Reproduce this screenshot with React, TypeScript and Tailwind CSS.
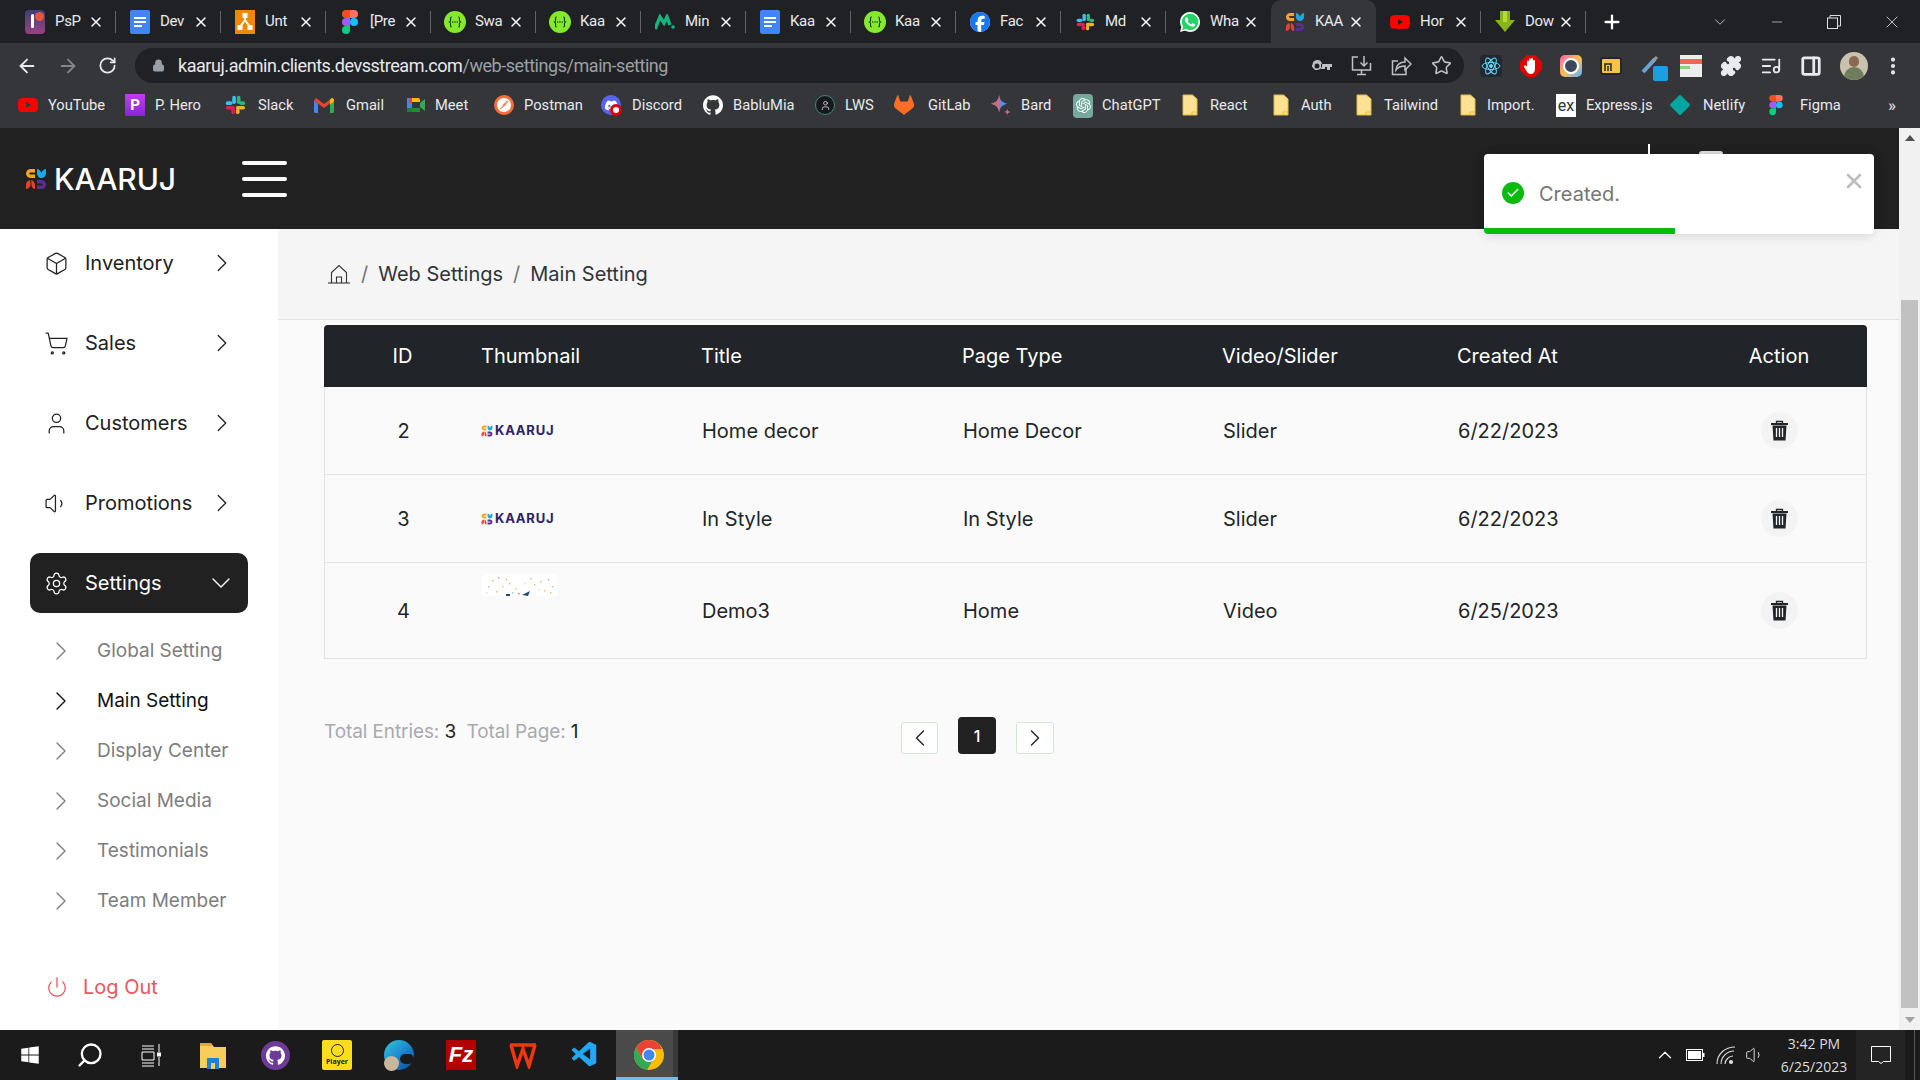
import React from "react";
import {
  SiGithub, SiGitlab, SiFacebook, SiWhatsapp, SiYoutube, SiPostman, SiDiscord, SiOpenai,
} from "react-icons/si";
import { FaWindows } from "react-icons/fa";
import { VscVscode } from "react-icons/vsc";
import {
  ArrowLeft, ArrowRight, RotateCw, Lock, Star, Puzzle, MoreVertical, Plus, X, ChevronDown, Minus,
  ChevronRight, ChevronLeft, Box, ShoppingCart, User, Volume1, Settings, Power, ChevronUp, Search,
  Check, ListMusic, PanelRight,
} from "lucide-react";

const Slack = ({ s = 20 }: { s?: number }) => (
  <svg width={s} height={s} viewBox="0 0 24 24">
    <rect x="9" y="2" width="4" height="9" rx="2" fill="#36c5f0" />
    <rect x="2" y="8" width="7" height="4" rx="2" fill="#36c5f0" />
    <rect x="14" y="2" width="4" height="9" rx="2" fill="#2eb67d" />
    <rect x="17" y="8" width="6" height="4" rx="2" fill="#2eb67d" />
    <rect x="13" y="13" width="10" height="4" rx="2" fill="#ecb22e" />
    <rect x="13" y="16" width="4" height="6" rx="2" fill="#ecb22e" />
    <rect x="2" y="13" width="10" height="4" rx="2" fill="#e01e5a" />
    <rect x="8" y="16" width="4" height="6" rx="2" fill="#e01e5a" />
  </svg>
);
const Figma = ({ s = 22 }: { s?: number }) => (
  <svg width={s} height={s} viewBox="0 0 16 24">
    <path d="M8 0H4a4 4 0 0 0 0 8h4z" fill="#f24e1e" />
    <path d="M8 0h4a4 4 0 0 1 0 8H8z" fill="#ff7262" />
    <path d="M8 8H4a4 4 0 0 0 0 8h4z" fill="#a259ff" />
    <circle cx="12" cy="12" r="4" fill="#1abcfe" />
    <path d="M8 16H4a4 4 0 1 0 4 4z" fill="#0acf83" />
  </svg>
);
const Swagger = ({ s = 20 }: { s?: number }) => (
  <svg width={s} height={s} viewBox="0 0 20 20">
    <circle cx="10" cy="10" r="10" fill="#85ea2d" />
    <path d="M7 5.500c-1.500 0-1 2-1 3s-1 1.500-1 1.500 1 .5 1 1.500-.5 3 1 3M13 5.500c1.500 0 1 2 1 3s1 1.500 1 1.500-1 .5-1 1.500.5 3-1 3" fill="none" stroke="#173b05" strokeWidth="1" />
    <circle cx="8" cy="10" r=".7" fill="#173b05" /><circle cx="10" cy="10" r=".7" fill="#173b05" /><circle cx="12" cy="10" r=".7" fill="#173b05" />
  </svg>
);
const Docs = () => (
  <svg width="20" height="24" viewBox="0 0 20 24">
    <rect width="20" height="24" rx="2" fill="#4285f4" />
    <path d="M4 7h12v2H4zM4 11h12v2H4zM4 15h8v2H4z" fill="#fff" />
  </svg>
);
const Kaaruj = ({ s = 22 }: { s?: number }) => (
  <svg width={s} height={s} viewBox="0 0 22 22">
    <path d="M1 5.500C1 3 3 1 6 1h4v3.500H6C5 4.500 4.500 5 4 5.500 4.500 6 5 6.500 6 6.500h4V10H6C3 10 1 8 1 5.500z" fill="#f6a623" />
    <path d="M12 1c2 0 4 2 4.500 4C17 3 19 1 21 1v4c0 3-2 5-4.500 5S12 8 12 5z" fill="#1ea7e1" />
    <path d="M1 21v-4c0-2 1-4 3.500-5 1 1 1 3 1 5 0 2-2.500 4-4.500 4zM6 12c2 0 4 3 4 5v4c-2 0-3.500-2-3.500-4 0-2 0-4-.5-5z" fill="#e8402a" />
    <path d="M12 12h4c3 0 5 2 5 4.500S19 21 16 21h-4v-3.500h4c1 0 1.500-.5 2-1-.5-.5-1-1-2-1h-4z" fill="#5b2d91" />
  </svg>
);
const Folder = () => (
  <svg width="16" height="22" viewBox="0 0 16 22">
    <path d="M1 1h9.500l4.500 4v16H1z" fill="#fde293" stroke="#e8b93c" strokeWidth="1" />
    <path d="M10 21v-3h5" fill="none" stroke="#e8b93c" strokeWidth="1" />
  </svg>
);
const Gmail = () => (
  <svg width="20" height="17" viewBox="0 0 20 16">
    <path d="M0 3v11a1.500 1.500 0 0 0 1.500 1.500H4V6z" fill="#4285f4" />
    <path d="M20 3v11a1.500 1.500 0 0 1-1.500 1.500H16V6z" fill="#34a853" />
    <path d="M0 3l10 7.500L20 3 18 0.500 10 6.500 2 0.500z" fill="#ea4335" />
    <path d="M16 2v5l4-3V2a2 2 0 0 0-2-1.500z" fill="#fbbc04" />
  </svg>
);
const Meet = () => (
  <svg width="20" height="20" viewBox="0 0 20 20">
    <rect x="1" y="3" width="13" height="14" rx="2" fill="#fbbc04" />
    <rect x="1" y="8" width="13" height="9" rx="1" fill="#1e8e3e" />
    <rect x="1" y="3" width="5" height="10" fill="#4285f4" />
    <rect x="6" y="7" width="8" height="6" fill="#35363a" />
    <path d="M14 8l5-4v12l-5-4z" fill="#34a853" />
    <rect x="1" y="13" width="5" height="4" fill="#188038" />
    <rect x="3" y="3" width="3" height="5" fill="#ea4335" />
  </svg>
);
const Bard = () => (
  <svg width="22" height="22" viewBox="0 0 24 24">
    <path d="M10 1c1 6 3 8 9 9.500-6 1.500-8 3.500-9 9.500-1-6-3-8-9-9.500C7 9 9 7 10 1z" fill="#5e8fe6" />
    <path d="M10 1c-1 6-3 8-9 9.500 6 1.500 8 3.500 9 9.500z" fill="#d96570" />
    <path d="M19 16c.4 2.200 1 3 3.500 3.500-2.500.5-3.100 1.300-3.500 3.500-.4-2.200-1-3-3.500-3.500 2.500-.5 3.100-1.300 3.500-3.500z" fill="#d96570" />
  </svg>
);
const Chat = () => (
  <span className="flex h-[24px] w-[20px] items-center justify-center rounded-sm bg-[#74aa9c] text-white"><SiOpenai size={15} /></span>
);
const ChromeLogo = () => (
  <svg width="30" height="30" viewBox="0 0 30 30">
    <circle cx="15" cy="15" r="15" fill="#fbbc04" />
    <path d="M15 0A15 15 0 0 0 2 7.500L8.500 19 15 9h13A15 15 0 0 0 15 0z" fill="#ea4335" />
    <path d="M2 7.500A15 15 0 0 0 13 30l6.500-11H8.500z" fill="#34a853" />
    <circle cx="15" cy="15" r="7" fill="#fff" />
    <circle cx="15" cy="15" r="5.500" fill="#4285f4" />
  </svg>
);
const TrashIcon = () => (
  <svg width="17" height="21" viewBox="0 0 17 21">
    <path d="M5.500 3V1.500h6V3" fill="none" stroke="#212529" strokeWidth="1.300" />
    <rect x="0" y="3" width="17" height="2" fill="#212529" />
    <path d="M1.500 5.500h14l-1 15h-12z" fill="#212529" />
    <path d="M5.500 8v9M8.500 8v9M11.500 8v9" stroke="#f3f3f3" strokeWidth="1.300" />
  </svg>
);
const HomeIcon = () => (
  <svg width="22" height="20" viewBox="0 0 22 20" fill="none" stroke="#333" strokeWidth="1.100">
    <path d="M3.500 19V8.500L11 1.500l7.500 7V19" />
    <path d="M0 19h22" />
    <path d="M8.500 19v-6h5v6" />
  </svg>
);
const Fav = ({ k }: { k: string }) => {
  if (k === "pspdf") return (
    <span className="relative block h-[24px] w-[20px] rounded-sm bg-gradient-to-b from-[#3a3d7c] to-[#9a3f7d]">
      <span className="absolute left-[6px] top-[4px] h-[14px] w-[3px] rounded-full bg-white" />
      <span className="absolute left-[10px] top-[2px] h-[9px] w-[9px] rounded-full bg-[#e9553c]" />
    </span>
  );
  if (k === "docs") return <Docs />;
  if (k === "unt") return (
    <svg width="20" height="24" viewBox="0 0 20 24"><rect width="20" height="24" fill="#f08705" /><path d="M10 4v6M10 10l-5 7M10 10l5 7" stroke="#fff" strokeWidth="2" /><rect x="7.500" y="3" width="5" height="5" fill="#fff" /><rect x="2.500" y="15" width="5" height="5" fill="#fff" /><rect x="12.500" y="15" width="5" height="5" fill="#fff" /></svg>
  );
  if (k === "figma") return <Figma s={24} />;
  if (k === "swagger") return <Swagger s={22} />;
  if (k === "mint") return (
    <svg width="20" height="16" viewBox="0 0 20 16"><path d="M0 15L5 3l4 6 3-6 3 8" fill="none" stroke="#16b47e" strokeWidth="3.500" /><circle cx="18" cy="13" r="1.800" fill="#16b47e" /></svg>
  );
  if (k === "fb") return <span className="block rounded-full bg-white"><SiFacebook size={20} color="#1877f2" /></span>;
  if (k === "slack") return <Slack />;
  if (k === "wa") return <span className="block rounded-full bg-[#25d366]"><SiWhatsapp size={20} color="#fff" /></span>;
  if (k === "kaaruj") return <Kaaruj s={20} />;
  if (k === "yt") return <SiYoutube size={20} color="#ff0000" />;
  if (k === "dl") return (
    <svg width="20" height="24" viewBox="0 0 20 24"><path d="M5 1h10v9h5L10 22 0 10h5z" fill="#86b51b" /><path d="M8 1h4v11H8z" fill="#b5d93b" /></svg>
  );
  return null;
};

const tabs = [
  ["pspdf", "PsP"], ["docs", "Dev"], ["unt", "Unt"], ["figma", "[Pre"], ["swagger", "Swa"], ["swagger", "Kaa"], ["mint", "Min"],
  ["docs", "Kaa"], ["swagger", "Kaa"], ["fb", "Fac"], ["slack", "Md"], ["wa", "Wha"],
];
const Tab = ({ k, t, active, sep = true }: { k: string; t: string; active?: boolean; sep?: boolean }) => (
  <div className={`flex h-[43px] w-[105px] shrink-0 items-center ${active ? "rounded-t-[10px] bg-[#35363a]" : ""}`}>
    <div className="ml-[12px] flex w-[24px] shrink-0 justify-center"><Fav k={k} /></div>
    <span className="ml-[8px] w-[27px] shrink-0 whitespace-nowrap text-[15px] tracking-[-0.3px] text-[#e8eaed]">{t}</span>
    <X size={16} strokeWidth={2.2} className="ml-[6px] shrink-0 text-white" />
    <span className={`ml-auto h-[22px] w-px ${sep ? "bg-[#5f6368]" : ""}`} />
  </div>
);

const marks: { w: string; gap: string; icon: React.ReactNode; t: string }[] = [
  { w: "w-[107px]", gap: "gap-[10px]", icon: <SiYoutube size={20} color="#ff0000" />, t: "YouTube" },
  { w: "w-[99px]", gap: "gap-[10px]", icon: <span className="flex h-[22px] w-[20px] items-center justify-center bg-gradient-to-b from-[#c43cf0] to-[#8a23d8] text-[15px] font-bold text-white">P</span>, t: "P. Hero" },
  { w: "w-[90px]", gap: "gap-[12px]", icon: <Slack s={22} />, t: "Slack" },
  { w: "w-[92px]", gap: "gap-[12px]", icon: <Gmail />, t: "Gmail" },
  { w: "w-[88px]", gap: "gap-[9px]", icon: <Meet />, t: "Meet" },
  { w: "w-[107px]", gap: "gap-[10px]", icon: <span className="flex h-[20px] w-[20px] items-center justify-center rounded-full bg-[#ff6c37] text-white"><SiPostman size={14} /></span>, t: "Postman" },
  { w: "w-[102px]", gap: "gap-[11px]", icon: <span className="relative flex h-[20px] w-[20px] items-center justify-center rounded-full bg-[#5865f2] text-white"><SiDiscord size={13} /><span className="absolute -bottom-[1px] -right-[1px] h-[12px] w-[12px] rounded-full border-[3px] border-[#e00000] bg-white" /></span>, t: "Discord" },
  { w: "w-[112px]", gap: "gap-[10px]", icon: <SiGithub size={20} color="#fff" />, t: "BabluMia" },
  { w: "w-[79px]", gap: "gap-[10px]", icon: <span className="flex h-[20px] w-[20px] items-center justify-center rounded-full border border-[#3b8a78] bg-[#17191c] text-[#c8c8c8]"><User size={11} /></span>, t: "LWS" },
  { w: "w-[96px]", gap: "gap-[14px]", icon: <SiGitlab size={20} color="#fc6d26" />, t: "GitLab" },
  { w: "w-[83px]", gap: "gap-[9px]", icon: <Bard />, t: "Bard" },
  { w: "w-[109px]", gap: "gap-[9px]", icon: <Chat />, t: "ChatGPT" },
  { w: "w-[91px]", gap: "gap-[12px]", icon: <Folder />, t: "React" },
  { w: "w-[83px]", gap: "gap-[12px]", icon: <Folder />, t: "Auth" },
  { w: "w-[104px]", gap: "gap-[12px]", icon: <Folder />, t: "Tailwind" },
  { w: "w-[96px]", gap: "gap-[11px]", icon: <Folder />, t: "Import." },
  { w: "w-[114px]", gap: "gap-[10px]", icon: <span className="flex h-[23px] w-[20px] items-center justify-center bg-white text-[16px] text-[#333]">ex</span>, t: "Express.js" },
  { w: "w-[96px]", gap: "gap-[13px]", icon: <span className="block h-[20px] w-[20px] rotate-45 scale-75 rounded-[2px] bg-[#05a6a0]" />, t: "Netlify" },
  { w: "w-[95px]", gap: "gap-[14px]", icon: <Figma s={20} />, t: "Figma" },
];

const side = [
  [Box, "Inventory"], [ShoppingCart, "Sales"], [User, "Customers"], [Volume1, "Promotions"],
] as const;
const subs = ["Global Setting", "Main Setting", "Display Center", "Social Media", "Testimonials", "Team Member"];

const ThumbLogo = () => (
  <div className="-ml-[1px] flex w-[77px] items-center gap-[2px]">
    <Kaaruj s={12} />
    <span className="whitespace-nowrap text-[13px] font-bold leading-none tracking-[0.8px] text-[#2c2265]">KAARUJ</span>
  </div>
);
const Speckle = () => (
  <svg width="75" height="22" viewBox="0 0 75 22" className="rounded-t-sm bg-white">
    {[[10,6,"#f4c16a"],[16,3,"#e9a0a0"],[20,12,"#f4c16a"],[27,9,"#a5d6b0"],[33,14,"#f4c16a"],[48,4,"#a5d6b0"],[52,10,"#f4c16a"],[58,7,"#9ec7e8"],[66,5,"#e9a0a0"],[70,12,"#a5d6b0"],[14,17,"#f4c16a"],[36,19,"#e66"],[62,16,"#f4c16a"],[6,12,"#a5d6b0"],[24,5,"#f4c16a"],[42,9,"#dcdcdc"],[56,15,"#dcdcdc"],[30,18,"#9ec7e8"],[68,18,"#f4c16a"],[4,18,"#dcdcdc"]].map(([x,y,c],i)=>(
      <rect key={i} x={x as number} y={y as number} width="1.500" height="1.500" fill={c as string} />
    ))}
    <path d="M40 21l8-4-2 5zM24 20h4v2h-4z" fill="#1d4d78" />
  </svg>
);

const rows = [
  { id: 2, h: "h-[88px]", img: <ThumbLogo />, t: "Home decor", p: "Home Decor", v: "Slider", top: "" },
  { id: 3, h: "h-[88px]", img: <ThumbLogo />, t: "In Style", p: "In Style", v: "Slider", top: "" },
  { id: 4, h: "h-[95px]", img: <Speckle />, t: "Demo3", p: "Home", v: "Video", top: "self-start mt-[11px]" },
];
const cols = "grid grid-cols-[157px_220px_261px_260px_235px_262px_148px]";

export default function App() {
  return (
    <div className="flex h-[1080px] w-[1920px] flex-col overflow-hidden bg-white font-['Inter',sans-serif]">
      {/* tab strip */}
      <div className="flex h-[43px] shrink-0 items-center bg-[#202124] pl-[11px] font-['Roboto',sans-serif]">
        {tabs.map(([k, t], i) => <Tab key={i} k={k} t={t} sep={i < 11} />)}
        <Tab k="kaaruj" t="KAA" active sep={false} />
        <Tab k="yt" t="Hor" />
        <Tab k="dl" t="Dow" />
        <Plus size={22} strokeWidth={2.5} className="ml-[15px] shrink-0 text-white" />
        <ChevronDown size={18} strokeWidth={1.2} className="ml-[88px] shrink-0 text-[#c8c8c8]" />
        <Minus size={16} strokeWidth={1} className="ml-[40px] shrink-0 text-[#ddd]" />
        <svg width="14" height="14" viewBox="0 0 14 14" className="ml-[42px] shrink-0" fill="none" stroke="#ddd"><rect x=".5" y="3" width="10" height="10.500" /><path d="M3 3V.5h10.500V11H10.500" /></svg>
        <X size={20} strokeWidth={1} className="ml-[41px] shrink-0 text-[#ddd]" />
      </div>

      {/* toolbar */}
      <div className="flex h-[40px] shrink-0 items-end bg-[#35363a] font-['Roboto',sans-serif]">
        <div className="flex h-[40px] w-[135px] shrink-0 items-center gap-[19px] pl-[16px] pt-[5px]">
          <ArrowLeft size={22} className="text-[#e8eaed]" />
          <ArrowRight size={22} className="text-[#80868b]" />
          <RotateCw size={19} strokeWidth={2.2} className="text-[#e8eaed]" />
        </div>
        <div className="flex h-[35px] w-[1329px] shrink-0 items-center rounded-full bg-[#202124] pl-[17px]">
          <Lock size={13} fill="#9aa0a6" className="text-[#9aa0a6]" />
          <span className="ml-[13px] whitespace-nowrap text-[18px] tracking-[-0.45px] text-[#e8eaed]">kaaruj.admin.clients.devsstream.com<span className="text-[#9aa0a6]">/web-settings/main-setting</span></span>
          <div className="ml-auto flex items-center gap-[19px] pr-[12px] text-[#bdc1c6]">
            <svg width="20" height="12" viewBox="0 0 20 12" fill="#bdc1c6"><path d="M5 0a5 5 0 1 1-4.500 7H0V5h.5A5 5 0 0 1 5 0zm0 3.500a2.500 2.500 0 1 0 0 5 2.500 2.500 0 0 0 0-5zM9 4h11v3h-2v3h-3V7h-2v2H9z" fillRule="evenodd" /></svg>
            <svg width="21" height="21" viewBox="0 0 21 21" fill="none" stroke="#bdc1c6" strokeWidth="1.500"><path d="M7 2H1.500v13h18V8" /><path d="M13 1v10M9.500 7.500L13 11l3.500-3.500" /><path d="M6 19.500h9M10.500 15v4" /></svg>
            <svg width="21" height="21" viewBox="0 0 21 21" fill="none" stroke="#bdc1c6" strokeWidth="1.500"><path d="M7 6H1.500v13.500H15V14" /><path d="M5 15c0-5 4-8 9-8V3l6 6-6 6v-4c-4 0-7 1-9 4z" /></svg>
            <Star size={21} strokeWidth={1.8} />
          </div>
        </div>
        <div className="flex h-[40px] flex-1 items-center gap-[18px] pl-[16px] pt-[5px]">
          <span className="flex h-[22px] w-[22px] shrink-0 items-center justify-center rounded-sm bg-[#23272f]">
            <svg width="20" height="20" viewBox="0 0 20 20" fill="none" stroke="#61dafb" strokeWidth="1"><ellipse cx="10" cy="10" rx="9" ry="3.500" /><ellipse cx="10" cy="10" rx="9" ry="3.500" transform="rotate(60 10 10)" /><ellipse cx="10" cy="10" rx="9" ry="3.500" transform="rotate(120 10 10)" /><circle cx="10" cy="10" r="1.500" fill="#61dafb" /></svg>
          </span>
          <span className="block h-[22px] w-[22px] shrink-0">
            <svg width="22" height="22" viewBox="0 0 22 22"><path d="M7 0h8l7 7v8l-7 7H7l-7-7V7z" fill="#e30000" /><path d="M7 11V6.500a1 1 0 0 1 2 0V4.500a1 1 0 0 1 2 0v-.5a1 1 0 0 1 2 0v2a1 1 0 0 1 2 0v8c0 3-2 5-4 5-3 0-4-2-5-4l-2-3c-.5-1 1-2 2-1z" fill="#fff" /></svg>
          </span>
          <span className="block h-[22px] w-[22px] shrink-0 rounded-[5px] bg-gradient-to-br from-[#f5a] via-[#fb4] to-[#3af] p-[3px]"><span className="block h-full w-full rounded-full border-2 border-white bg-[#3a4a5a]" /></span>
          <span className="block h-[18px] w-[22px] shrink-0">
            <svg width="22" height="18" viewBox="0 0 22 18"><rect x="1" y="1" width="20" height="16" rx="2" fill="#f5c542" stroke="#26262a" strokeWidth="2" /><path d="M5 14V7h6v7M8 14V9" fill="none" stroke="#26262a" strokeWidth="1.500" /></svg>
          </span>
          <span className="relative block h-[22px] w-[22px] shrink-0"><svg width="20" height="20" viewBox="0 0 20 20"><path d="M3 17L15 4" stroke="#6aa5d8" strokeWidth="4" /><path d="M13 6l4-4" stroke="#999" strokeWidth="3" /></svg><span className="absolute -bottom-[4px] right-[-6px] h-[15px] w-[15px] rounded-[2px] bg-[#1c9fe0]" /></span>
          <span className="block h-[22px] w-[22px] shrink-0 bg-[#ededed] pt-[4px]"><span className="block h-[5px] w-full bg-[#f0675a]" /><span className="mt-[2px] block h-[3px] w-[10px] bg-[#8ccf85]" /></span>
          <Puzzle size={22} fill="#e8eaed" className="shrink-0 text-[#e8eaed]" />
          <ListMusic size={22} className="shrink-0 text-[#e8eaed]" />
          <PanelRight size={22} strokeWidth={3} className="shrink-0 text-[#e8eaed]" />
          <span className="relative block h-[28px] w-[28px] shrink-0 overflow-hidden rounded-full bg-[#c9c2ae]">
            <span className="absolute left-[9px] top-[4px] h-[11px] w-[10px] rounded-full bg-[#8d6a4f]" />
            <span className="absolute left-[4px] top-[15px] h-[14px] w-[20px] rounded-t-full bg-[#6f7d5c]" />
          </span>
          <MoreVertical size={22} strokeWidth={2.5} className="-ml-[4px] shrink-0 text-[#e8eaed]" />
        </div>
      </div>

      {/* bookmarks */}
      <div className="flex h-[45px] shrink-0 items-center bg-[#35363a] pl-[18px] font-['Roboto',sans-serif] text-[14.7px] text-[#e8eaed]">
        {marks.map((m) => (
          <div key={m.t} className={`flex shrink-0 items-center ${m.w} ${m.gap}`}>
            <span className="flex shrink-0 items-center justify-center">{m.icon}</span>
            <span className="whitespace-nowrap">{m.t}</span>
          </div>
        ))}
        <span className="ml-[27px] text-[17px]">»</span>
      </div>

      {/* page */}
      <div className="relative flex min-h-0 flex-1">
        <div className="flex min-w-0 flex-1 flex-col">
          <header className="flex h-[101px] shrink-0 items-center bg-[#212121] pl-[25px]">
            <div className="flex w-[217px] shrink-0 items-center gap-[7px]">
              <Kaaruj s={22} />
              <span className="text-[30px] font-medium leading-none tracking-[-0.1px] text-white">KAARUJ</span>
            </div>
            <div className="flex w-[45px] shrink-0 flex-col gap-[12px]">
              <span className="h-[4px] rounded-full bg-white" />
              <span className="h-[4px] rounded-full bg-white" />
              <span className="h-[4px] rounded-full bg-white" />
            </div>
            <div className="mb-[53px] ml-[1361px] h-[16px] w-[2px] shrink-0 bg-white" />
            <div className="mb-[53px] ml-[49px] h-[3px] w-[24px] shrink-0 rounded-t-full bg-[#ddd]" />
          </header>

          <div className="flex min-h-0 flex-1">
            <aside className="flex w-[278px] shrink-0 flex-col bg-white">
              <div className="flex flex-col pt-[4px]">
                {side.map(([I, t]) => (
                  <div key={t} className="mb-[20px] flex h-[60px] items-center pl-[44px] pr-[41px] text-[20px] text-[#212121]">
                    <I size={25} strokeWidth={1.2} className="shrink-0" />
                    <span className="ml-[16px]">{t}</span>
                    <ChevronRight size={30} strokeWidth={1} className="ml-auto shrink-0" />
                  </div>
                ))}
                <div className="mx-[30px] flex h-[60px] items-center rounded-[10px] bg-[#212121] pl-[14px] pr-[11px] text-[20px] text-white">
                  <Settings size={25} strokeWidth={1.2} className="shrink-0" />
                  <span className="ml-[16px]">Settings</span>
                  <ChevronDown size={32} strokeWidth={1} className="ml-auto shrink-0" />
                </div>
                <div className="mt-[13px] flex flex-col">
                  {subs.map((s, i) => (
                    <div key={s} className={`flex h-[50px] items-center pl-[45px] text-[19px] ${i === 1 ? "text-[#111]" : "text-[#7d7d7d]"}`}>
                      <ChevronRight size={32} strokeWidth={1} className="shrink-0" />
                      <span className="ml-[20px]">{s}</span>
                    </div>
                  ))}
                </div>
              </div>
              <div className="mt-[46px] flex items-center gap-[15px] pl-[46px] text-[20px] text-[#ef5360]">
                <Power size={22} strokeWidth={1.4} className="shrink-0" />
                <span>Log Out</span>
              </div>
            </aside>

            <main className="flex min-w-0 flex-1 flex-col bg-[#fafafa]">
              <div className="flex h-[91px] shrink-0 items-center gap-[10px] border-b border-[#e2e2e2] bg-[#f5f5f5] pl-[50px] text-[20px] text-[#2f3338]">
                <HomeIcon />
                <span className="ml-[1px] text-[#6c757d]">/</span>
                <span>Web Settings</span>
                <span className="text-[#6c757d]">/</span>
                <span>Main Setting</span>
              </div>
              <div className="ml-[46px] mr-[32px] mt-[5px] flex flex-col text-[20px] text-[#212529]">
                <div className={`${cols} h-[62px] shrink-0 items-center rounded-t-[4px] bg-[#212529] text-white`}>
                  <span className="text-center">ID</span>
                  <span>Thumbnail</span>
                  <span>Title</span>
                  <span>Page Type</span>
                  <span>Video/Slider</span>
                  <span>Created At</span>
                  <span className="pr-[28px] text-center">Action</span>
                </div>
                <div className="border-x border-b border-[#e2e2e2]">
                  {rows.map((r, i) => (
                    <div key={r.id} className={`${cols} ${r.h} items-center ${i < 2 ? "border-b border-[#e2e2e2]" : ""}`}>
                      <span className="text-center">{r.id}</span>
                      <div className={r.top}>{r.img}</div>
                      <span>{r.t}</span>
                      <span>{r.p}</span>
                      <span>{r.v}</span>
                      <span>6/{r.id === 4 ? 25 : 22}/2023</span>
                      <div className="flex justify-center pr-[30px]">
                        <span className="flex h-[37px] w-[37px] items-center justify-center rounded-full bg-[#f3f3f3]">
                          <TrashIcon />
                        </span>
                      </div>
                    </div>
                  ))}
                </div>
              </div>
              <div className="ml-[46px] mt-[58px] flex items-start">
                <div className="mt-[1px] w-[577px] text-[19px] tracking-[-0.1px] text-[#a9a9b0]">
                  Total Entries: <span className="text-[#212121]">3</span>&nbsp; Total Page: <span className="text-[#212121]">1</span>
                </div>
                <div className="flex items-start gap-[20px]">
                  <span className="mt-[5px] flex h-[32px] w-[37px] items-center justify-center rounded-[3px] border border-[#cfe8cf] bg-white"><ChevronLeft size={28} strokeWidth={1.2} className="text-[#212121]" /></span>
                  <span className="flex h-[37px] w-[38px] items-center justify-center rounded-[4px] bg-[#212121] text-[16px] font-medium text-white">1</span>
                  <span className="mt-[5px] flex h-[32px] w-[38px] items-center justify-center rounded-[3px] border border-[#cfe8cf] bg-white"><ChevronRight size={28} strokeWidth={1.2} className="text-[#212121]" /></span>
                </div>
              </div>
            </main>
          </div>
        </div>

        {/* scrollbar */}
        <div className="flex w-[21px] shrink-0 flex-col items-center bg-[#f1f1f1]">
          <span className="mt-[7px] h-0 w-0 border-x-[5px] border-b-[6px] border-x-transparent border-b-[#505050]" />
          <span className="mt-[159px] h-[708px] w-[17px] bg-[#c1c1c1]" />
          <span className="mt-[9px] h-0 w-0 border-x-[5px] border-t-[6px] border-x-transparent border-t-[#a3a3a3]" />
        </div>

        {/* toast */}
        <div className="absolute left-[1484px] top-[26px] flex h-[80px] w-[390px] flex-col overflow-hidden rounded-[4px] bg-white shadow-[0_1px_10px_rgba(0,0,0,0.1),0_2px_15px_rgba(0,0,0,0.05)]">
          <div className="flex flex-1 items-start">
            <span className="ml-[18px] mt-[28px] flex h-[22px] w-[22px] shrink-0 items-center justify-center rounded-full bg-[#07bc0c] text-white"><Check size={14} strokeWidth={2.5} /></span>
            <span className="ml-[15px] mt-[27px] text-[20px] leading-[26px] text-[#757575]">Created.</span>
            <X size={24} strokeWidth={2.6} className="ml-auto mr-[8px] mt-[15px] shrink-0 text-[#bdbdbd]" />
          </div>
          <div className="h-[6px] w-[191px] bg-[#07bc0c]" />
        </div>
      </div>

      {/* taskbar */}
      <div className="flex h-[50px] shrink-0 items-center bg-[#1b1b1b] font-['Open_Sans',sans-serif] text-white">
        <div className="flex w-[60px] shrink-0 justify-center"><FaWindows size={20} /></div>
        <div className="flex w-[60px] shrink-0 justify-center"><Search size={28} strokeWidth={2} className="-scale-x-100" /></div>
        <div className="flex w-[62px] shrink-0 justify-center">
          <svg width="20" height="24" viewBox="0 0 20 24" fill="none" stroke="#fff"><path d="M1 3h12M1 6h12M1 9h12v8H1zM1 20h12M1 23h12M18 1v8M18 14v9" /><rect x="16.500" y="10" width="3" height="3" fill="#fff" /></svg>
        </div>
        <div className="flex w-[62px] shrink-0 justify-center">
          <svg width="28" height="30" viewBox="0 0 28 30"><path d="M1 3h11l3 4h12v21H1z" fill="#f8cd5c" /><path d="M1 3h11l2 3H1z" fill="#e0a92f" /><rect x="8" y="18" width="12" height="11" fill="#1d83d4" /><rect x="12" y="23" width="4" height="6" fill="#f8cd5c" /></svg>
        </div>
        <div className="flex w-[62px] shrink-0 justify-center">
          <span className="flex h-[29px] w-[29px] items-center justify-center rounded-full bg-[#6e3a98]"><SiGithub size={19} color="#fff" /></span>
        </div>
        <div className="flex w-[62px] shrink-0 justify-center">
          <span className="flex h-[30px] w-[30px] flex-col items-center justify-center rounded-[2px] bg-[#fbdd1c] text-[#222]"><span className="h-[13px] w-[13px] rounded-full border border-[#222]" /><span className="text-[7px] font-bold leading-[9px]">Player</span></span>
        </div>
        <div className="flex w-[62px] shrink-0 justify-center">
          <span className="relative block h-[30px] w-[30px] rounded-full bg-gradient-to-br from-[#36c6d3] via-[#1e88d2] to-[#0a4b8f]"><span className="absolute bottom-[6px] right-0 h-[10px] w-[14px] rounded-full bg-[#1b1b1b]" /><span className="absolute -bottom-[1px] left-0 h-[15px] w-[15px] rounded-full bg-[#c8b79a]" /></span>
        </div>
        <div className="flex w-[62px] shrink-0 justify-center">
          <span className="flex h-[30px] w-[30px] items-center justify-center bg-[#b30000] font-['Liberation_Sans',sans-serif] text-[22px] font-bold italic leading-none text-white">Fz</span>
        </div>
        <div className="flex w-[62px] shrink-0 justify-center">
          <svg width="30" height="28" viewBox="0 0 30 28" fill="none"><path d="M2 4h26M3 4l6 21 6-17 6 17 6-21" stroke="#f4360f" strokeWidth="3.500" /></svg>
        </div>
        <div className="flex w-[62px] shrink-0 justify-center"><VscVscode size={30} color="#23a7f2" /></div>
        <div className="flex h-[50px] w-[57px] shrink-0 flex-col items-center justify-between bg-[#4a4a4a]">
          <span className="ml-[8px] mt-[10px]"><ChromeLogo /></span>
          <span className="h-[3px] w-full bg-[#76b9ed]" />
        </div>
        <div className="flex h-[50px] w-[5px] shrink-0 flex-col justify-end bg-[#3a3a3a]"><span className="h-[3px] bg-[#76b9ed]" /></div>

        <div className="ml-[976px] flex shrink-0 items-center">
          <ChevronUp size={22} strokeWidth={1.3} className="shrink-0" />
          <svg width="20" height="12" viewBox="0 0 20 12" className="ml-[10px] shrink-0"><rect x=".5" y=".5" width="16" height="11" fill="none" stroke="#fff" /><rect x="2" y="2" width="13" height="8" fill="#fff" /><rect x="17" y="4" width="1.500" height="4" fill="#fff" /></svg>
          <svg width="20" height="20" viewBox="0 0 20 20" fill="none" stroke="#ddd" strokeWidth="1.100" className="ml-[10px] shrink-0"><path d="M1 19C1 9 9 2 19 2M5 19C5 12 11 6 18 6M9 19c0-4 4-8 8-8" /><circle cx="15" cy="17" r="1.500" fill="#ddd" /></svg>
          <Volume1 size={20} strokeWidth={1.2} className="ml-[9px] shrink-0 text-[#ddd]" />
        </div>
        <div className="ml-[9px] flex w-[80px] shrink-0 flex-col items-center text-[14px] leading-[23px] text-[#ddd]">
          <span>3:42 PM</span>
          <span>6/25/2023</span>
        </div>
        <div className="ml-[2px] flex h-[50px] w-[49px] shrink-0 items-center justify-center bg-[#242424]">
          <svg width="20" height="20" viewBox="0 0 20 20" fill="none" stroke="#fff"><path d="M.5 1.500h19v15h-7l-2.500 2-2.500-2h-7z" /></svg>
        </div>
        <span className="ml-[9px] h-[50px] w-px shrink-0 bg-[#555]" />
      </div>
    </div>
  );
}
